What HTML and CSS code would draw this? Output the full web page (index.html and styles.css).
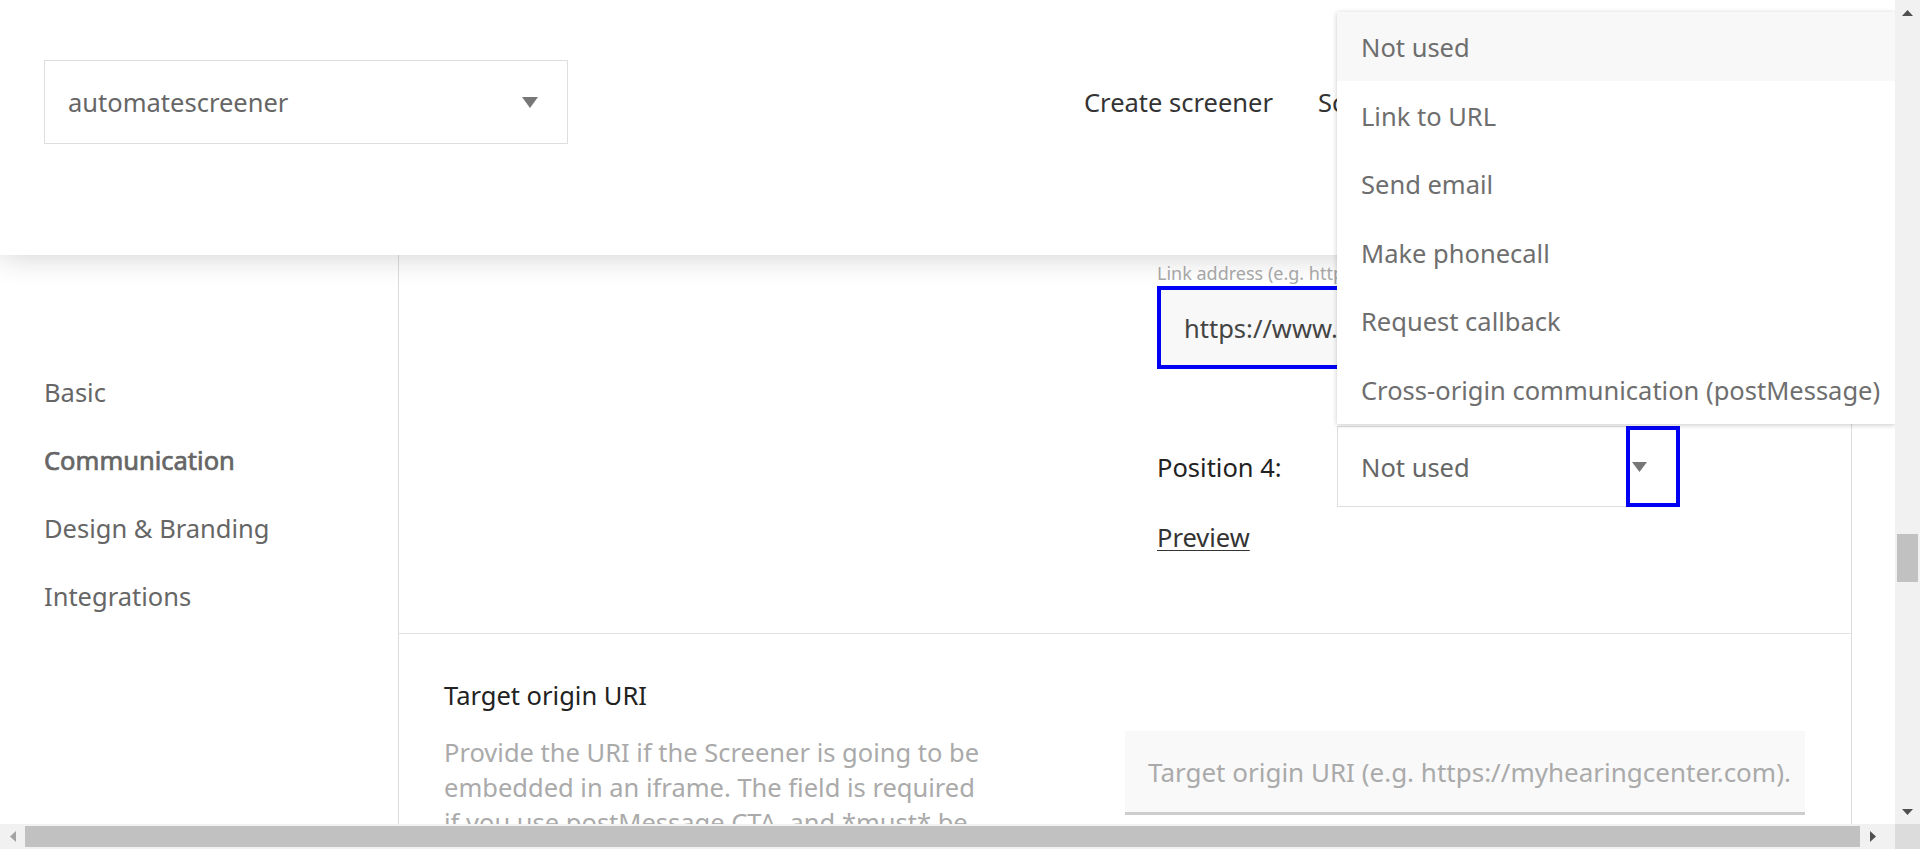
FILE: index.html
```html
<!DOCTYPE html>
<html lang="en">
<head>
<meta charset="utf-8">
<title>Screener settings</title>
<link rel="stylesheet" href="styles.css">
</head>
<body>
<div class="screen">
  <div class="page">
    <header class="topbar">
      <div class="site-select">
        <span class="site-select-text">automatescreener</span>
        <svg class="tri" width="16" height="11" viewBox="0 0 16 11"><polygon points="0,0 16,0 8,11" fill="#777"/></svg>
      </div>
      <nav class="topnav">
        <a class="topnav-link">Create screener</a>
        <a class="topnav-link">Screeners</a>
        <a class="topnav-link">Account</a>
        <a class="topnav-link">Log out</a>
      </nav>
    </header>

    <div class="layout">
      <aside class="sidebar">
        <a class="side-link">Basic</a>
        <a class="side-link active">Communication</a>
        <a class="side-link">Design &amp; Branding</a>
        <a class="side-link">Integrations</a>
      </aside>

      <main class="card">
        <section class="cta-section">
          <div class="cta-col">
            <label class="small-label">Link address (e.g. https://myhearingcenter.com/contact)</label>
            <div class="text-input focused">https://www.automatescreener.com/contact</div>
            <div class="position-row">
              <span class="position-label">Position 4:</span>
              <div class="select">
                <span class="select-text">Not used</span>
                <span class="select-arrow"><svg width="15" height="10" viewBox="0 0 15 10"><polygon points="0,0 15,0 7.5,10" fill="#777"/></svg></span>
              </div>
            </div>
            <a class="preview-link">Preview</a>
          </div>
        </section>

        <section class="origin-section">
          <div class="origin-text">
            <h3 class="field-title">Target origin URI</h3>
            <p class="field-desc">Provide the URI if the Screener is going to be embedded in an iframe. The field is required if you use postMessage CTA, and *must* be the exact origin of the page embedding the Screener.</p>
          </div>
          <div class="origin-field">
            <div class="plain-input">Target origin URI (e.g. https://myhearingcenter.com).</div>
          </div>
        </section>
      </main>
    </div>

    <ul class="menu">
      <li class="menu-item hover">Not used</li>
      <li class="menu-item">Link to URL</li>
      <li class="menu-item">Send email</li>
      <li class="menu-item">Make phonecall</li>
      <li class="menu-item">Request callback</li>
      <li class="menu-item">Cross-origin communication (postMessage)</li>
    </ul>
  </div>

  <div class="vscroll">
    <span class="sb-btn"><svg width="11" height="6" viewBox="0 0 11 6"><polygon points="0,6 11,6 5.5,0" fill="#505050"/></svg></span>
    <span class="vthumb"></span>
    <span class="sb-btn sb-end"><svg width="11" height="6" viewBox="0 0 11 6"><polygon points="0,0 11,0 5.5,6" fill="#505050"/></svg></span>
  </div>
  <div class="hscroll">
    <span class="sb-btn"><svg width="6" height="11" viewBox="0 0 6 11"><polygon points="6,0 6,11 0,5.5" fill="#a3a3a3"/></svg></span>
    <span class="hthumb"></span>
    <span class="sb-btn"><svg width="6" height="11" viewBox="0 0 6 11"><polygon points="0,0 0,11 6,5.5" fill="#505050"/></svg></span>
  </div>
  <div class="corner"></div>
</div>
</body>
</html>
```

FILE: styles.css
```css
* { box-sizing: border-box; }

html, body {
  margin: 0;
  padding: 0;
  background: #fff;
}

body {
  font-family: "Noto Sans", "Open Sans", "DejaVu Sans", sans-serif;
  font-size: 25.5px;
  line-height: 34px;
  color: #333;
}

.screen {
  width: 1920px;
  height: 849px;
  display: grid;
  grid-template-columns: 1895px 25px;
  grid-template-rows: 824px 25px;
  overflow: hidden;
}

.page {
  position: relative;
  overflow: hidden;
  background: #fff;
}

/* ---------- header ---------- */
.topbar {
  position: relative;
  z-index: 2;
  height: 255px;
  background: #fff;
  display: flex;
  align-items: flex-start;
  padding: 60px 0 0 44px;
  box-shadow: 0 0 30px rgba(0, 0, 0, 0.2);
}

.site-select {
  width: 524px;
  height: 84px;
  border: 1px solid #dedede;
  display: flex;
  align-items: center;
  justify-content: space-between;
  padding: 0 29px 0 23px;
  color: #666;
  flex-shrink: 0;
}

.tri { display: block; }

.topnav {
  display: flex;
  align-items: center;
  height: 84px;
  gap: 45px;
  margin-left: 516px;
  white-space: nowrap;
}

.topnav-link {
  color: #333;
  text-decoration: none;
}

/* ---------- layout ---------- */
.layout {
  display: flex;
  height: 569px;
}

.sidebar {
  width: 399px;
  flex-shrink: 0;
  border-right: 1px solid #dcdcdc;
  padding: 103px 0 0 44px;
  display: flex;
  flex-direction: column;
}

.side-link {
  display: block;
  padding: 17px 0;
  color: #666;
  text-decoration: none;
}

.side-link.active {
  color: #666;
  -webkit-text-stroke: 0.7px #666;
}

.card {
  width: 1453px;
  flex-shrink: 0;
  border-right: 1px solid #dcdcdc;
}

.cta-section {
  padding: 6px 0 79px 758px;
  border-bottom: 1px solid #e3e3e3;
}

.cta-col {
  display: flex;
  flex-direction: column;
  align-items: flex-start;
}

.small-label {
  font-size: 18px;
  line-height: 24px;
  color: #aaa;
  white-space: nowrap;
}

.text-input {
  margin-top: 1px;
  width: 648px;
  height: 83px;
  background: #f8f8f8;
  display: flex;
  align-items: center;
  padding-left: 23px;
  color: #444;
  white-space: nowrap;
  overflow: hidden;
}

.text-input.focused {
  border: 4px solid #0000f5;
}

.position-row {
  margin-top: 57px;
  display: flex;
  align-items: center;
}

.position-label {
  width: 180px;
  color: #222;
}

.select {
  width: 343px;
  height: 81px;
  border: 1px solid #dedede;
  border-right: none;
  display: flex;
  align-items: center;
}

.select-text {
  flex: 1;
  padding-left: 23px;
  color: #666;
}

.select-arrow {
  width: 54px;
  height: 81px;
  margin: -1px 0;
  border: 4px solid #0000f5;
  display: flex;
  align-items: center;
  padding: 1px 0 0 2px;
}

.select-arrow svg { display: block; }

.preview-link {
  margin-top: 13px;
  color: #333;
  text-decoration: underline;
  text-underline-offset: 3px;
  text-decoration-thickness: 1px;
}

.origin-section {
  display: flex;
  justify-content: space-between;
  padding: 44px 46px 0 45px;
}

.origin-text {
  width: 548px;
}

.field-title {
  margin: 0;
  font-size: 25.5px;
  font-weight: 400;
  line-height: 34px;
  color: #222;
}

.field-desc {
  margin: 23px 0 0;
  line-height: 35px;
  color: #aaa;
}

.origin-field {
  width: 680px;
  padding-top: 53px;
}

.plain-input {
  height: 84px;
  background: #f9f9f9;
  border-bottom: 3px solid #cdcdcd;
  display: flex;
  align-items: center;
  padding-left: 23px;
  font-size: 26px;
  color: #aaa;
  white-space: nowrap;
  overflow: hidden;
}

/* ---------- dropdown menu (overlay) ---------- */
.menu {
  position: absolute;
  z-index: 3;
  top: 12px;
  left: 1337px;
  width: 558px;
  margin: 0;
  padding: 0;
  list-style: none;
  background: #fff;
  box-shadow: 0 1px 5px rgba(0, 0, 0, 0.22);
}

.menu-item {
  height: 68.6px;
  padding: 18px 23px 0 24px;
  color: #6e6e6e;
  white-space: nowrap;
}

.menu-item.hover {
  background: #f8f8f8;
}

/* ---------- scrollbars ---------- */
.vscroll {
  background: #f1f1f1;
  display: flex;
  flex-direction: column;
  align-items: center;
}

.hscroll {
  background: #f1f1f1;
  display: flex;
  align-items: center;
}

.corner {
  background: #dcdcdc;
}

.sb-btn {
  width: 25px;
  height: 25px;
  flex-shrink: 0;
  display: flex;
  align-items: center;
  justify-content: center;
}

.sb-btn svg { display: block; }

.sb-end { margin-top: auto; }

.vthumb {
  width: 21px;
  height: 48px;
  margin-top: 509px;
  background: #c1c1c1;
}

.hthumb {
  width: 1835px;
  height: 21px;
  background: #c1c1c1;
}
```
